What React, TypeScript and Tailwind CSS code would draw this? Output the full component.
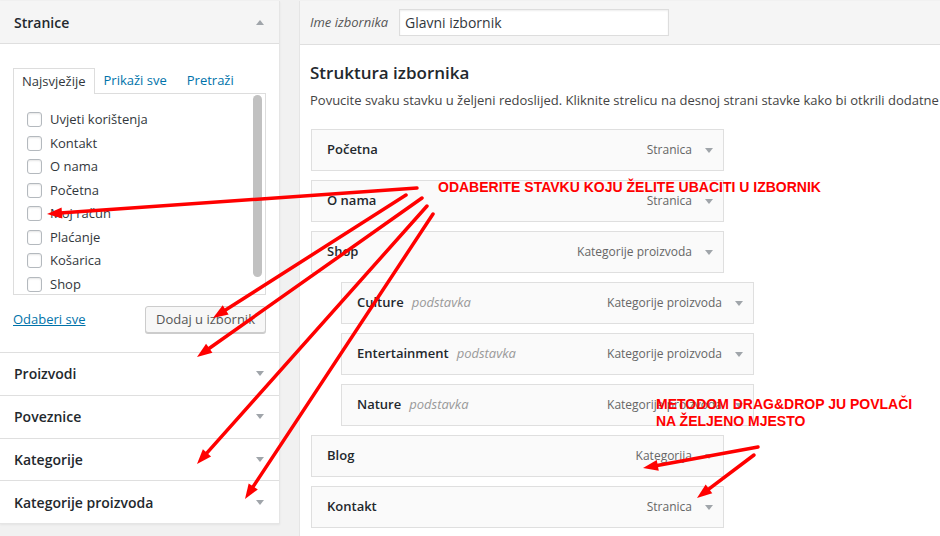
import React from "react";

const pages = [
  "Uvjeti korištenja",
  "Kontakt",
  "O nama",
  "Početna",
  "Moj račun",
  "Plaćanje",
  "Košarica",
  "Shop",
];

const sections = ["Proizvodi", "Poveznice", "Kategorije", "Kategorije proizvoda"];

const menuItems = [
  { title: "Početna", type: "Stranica", sub: false },
  { title: "O nama", type: "Stranica", sub: false },
  { title: "Shop", type: "Kategorije proizvoda", sub: false },
  { title: "Culture", type: "Kategorije proizvoda", sub: true },
  { title: "Entertainment", type: "Kategorije proizvoda", sub: true },
  { title: "Nature", type: "Kategorije proizvoda", sub: true },
  { title: "Blog", type: "Kategorija", sub: false },
  { title: "Kontakt", type: "Stranica", sub: false },
];

// [fromX, fromY, tipX, tipY]
const arrows: [number, number, number, number][] = [
  [417, 188, 47, 214],
  [406, 195, 213, 318],
  [422, 198, 197, 357],
  [427, 206, 197, 464],
  [433, 214, 245, 499],
  [758, 447, 643, 468],
  [754, 455, 697, 498],
];

function DownArrow() {
  return (
    <span className="inline-block w-0 h-0 border-l-[4px] border-r-[4px] border-t-[5px] border-l-transparent border-r-transparent border-t-[#a0a5aa]" />
  );
}

function UpArrow() {
  return (
    <span className="inline-block w-0 h-0 border-l-[4px] border-r-[4px] border-b-[5px] border-l-transparent border-r-transparent border-b-[#a0a5aa]" />
  );
}

function Arrow({ a }: { a: [number, number, number, number] }) {
  const [x1, y1, x2, y2] = a;
  const len = Math.hypot(x2 - x1, y2 - y1);
  const dx = (x2 - x1) / len;
  const dy = (y2 - y1) / len;
  const head = 15;
  const w = 5.5;
  const bx = x2 - dx * head;
  const by = y2 - dy * head;
  const pts = `${x2},${y2} ${bx - dy * w},${by + dx * w} ${bx + dy * w},${by - dx * w}`;
  return (
    <g>
      <line
        x1={x1}
        y1={y1}
        x2={bx + dx * 2}
        y2={by + dy * 2}
        stroke="#ff0000"
        strokeWidth={3.5}
        strokeLinecap="round"
      />
      <polygon points={pts} fill="#ff0000" />
    </g>
  );
}

function PagesBox() {
  return (
    <div className="w-[280px] shrink-0 h-[523px] bg-white border-r border-b border-[#e5e5e5] shadow-[0_1px_2px_rgba(0,0,0,0.06)]">
      <div className="h-[43px] flex items-center justify-between pl-[14px] pr-[15px] bg-[#f5f5f5] border-b border-[#dfdfdf]">
        <span className="text-[14px] font-semibold text-[#23282d]">Stranice</span>
        <UpArrow />
      </div>

      <div className="pt-[24px] px-[13px]">
        <div className="flex text-[13px] h-[25px]">
          <div className="px-[8px] border border-b-0 border-[#dddddd] bg-white text-[#32373c] flex items-center relative z-10 h-[26px]">
            Najsvježije
          </div>
          <div className="pl-[9px] pr-[10px] text-[#0073aa] flex items-center">Prikaži sve</div>
          <div className="px-[10px] text-[#0073aa] flex items-center">Pretraži</div>
        </div>
        <div className="h-[202px] border border-[#dddddd] flex overflow-hidden bg-white">
          <div className="flex-1 pt-[14px] pl-[13px]">
            {pages.map((p) => (
              <div key={p} className="h-[23.5px] flex items-center gap-[8px] text-[13px] text-[#32373c]">
                <span className="w-[15px] h-[15px] rounded-[3px] border border-[#b4b9be] bg-white shadow-[inset_0_1px_2px_rgba(0,0,0,0.1)]" />
                {p}
              </div>
            ))}
          </div>
          <div className="w-[9px] mr-[3px] mt-[1px] h-[182px] rounded-full bg-[#c1c1c1]" />
        </div>

        <div className="flex items-center justify-between mt-[11px] pb-[19px]">
          <span className="text-[13px] text-[#0073aa] underline">Odaberi sve</span>
          <button className="h-[27px] w-[121px] text-[13px] text-[#555] bg-[#f7f7f7] border border-[#cccccc] rounded-[3px] shadow-[0_1px_0_#cccccc]">
            Dodaj u izbornik
          </button>
        </div>
      </div>

      {sections.map((s) => (
        <div
          key={s}
          className="h-[42.75px] flex items-center justify-between pl-[14px] pr-[15px] border-t border-[#dfdfdf]"
        >
          <span className="text-[14px] font-semibold text-[#23282d]">{s}</span>
          <DownArrow />
        </div>
      ))}
    </div>
  );
}

function MenuStructure() {
  return (
    <div className="flex-1 min-w-0 h-[535px] bg-white border-l border-[#e5e5e5] overflow-hidden">
      <div className="h-[44px] flex items-center pl-[10px] bg-[#f5f5f5] border-b border-[#dfdfdf]">
        <span className="text-[13px] italic text-[#555] w-[89px]">Ime izbornika</span>
        <div className="w-[270px] h-[27px] border border-[#dddddd] bg-white flex items-center pl-[5px] text-[14px] text-[#32373c] shadow-[inset_0_1px_2px_rgba(0,0,0,0.07)]">
          Glavni izbornik
        </div>
      </div>

      <div className="pl-[10px] pt-[16px]">
        <h2 className="text-[17px] leading-[24px] font-semibold text-[#23282d]">Struktura izbornika</h2>
        <p className="mt-[6px] text-[13px] leading-[19px] text-[#444] whitespace-nowrap">
          Povucite svaku stavku u željeni redoslijed. Kliknite strelicu na desnoj strani stavke kako bi otkrili dodatne
          opcije konfiguracije.
        </p>

        <div className="mt-[19px] flex flex-col gap-[9px] pl-px">
          {menuItems.map((m) => (
            <div
              key={m.title}
              className={`w-[413px] h-[42px] border border-[#dfdfdf] bg-[#fafafa] flex items-center justify-between pl-[15px] pr-[10px] ${
                m.sub ? "ml-[30px]" : ""
              }`}
            >
              <div className="flex items-baseline gap-[8px]">
                <span className="text-[13px] font-semibold text-[#23282d]">{m.title}</span>
                {m.sub && <span className="text-[13px] italic text-[#999]">podstavka</span>}
              </div>
              <div className="flex items-center gap-[13px]">
                <span className="text-[12px] text-[#666]">{m.type}</span>
                <DownArrow />
              </div>
            </div>
          ))}
        </div>
      </div>
    </div>
  );
}

export default function App() {
  return (
    <div className="relative w-[940px] h-[536px] overflow-hidden bg-[#f1f1f1] font-['Open_Sans',sans-serif]">
      <div className="flex gap-[19px] pt-px">
        <PagesBox />
        <MenuStructure />
      </div>

      {/* Annotations */}
      <div className="absolute left-[438px] top-[179px] text-[14px] leading-[17px] font-bold text-[#ff0000] font-['Liberation_Sans',Arial,sans-serif] whitespace-nowrap">
        ODABERITE STAVKU KOJU ŽELITE UBACITI U IZBORNIK
      </div>
      <div className="absolute left-[656px] top-[396px] text-[14px] leading-[17px] font-bold text-[#ff0000] font-['Liberation_Sans',Arial,sans-serif] whitespace-nowrap">
        METODOM DRAG&amp;DROP JU POVLAČI
        <br />
        NA ŽELJENO MJESTO
      </div>
      <svg className="absolute inset-0 pointer-events-none" width={940} height={536}>
        {arrows.map((a, i) => (
          <Arrow key={i} a={a} />
        ))}
      </svg>
    </div>
  );
}
